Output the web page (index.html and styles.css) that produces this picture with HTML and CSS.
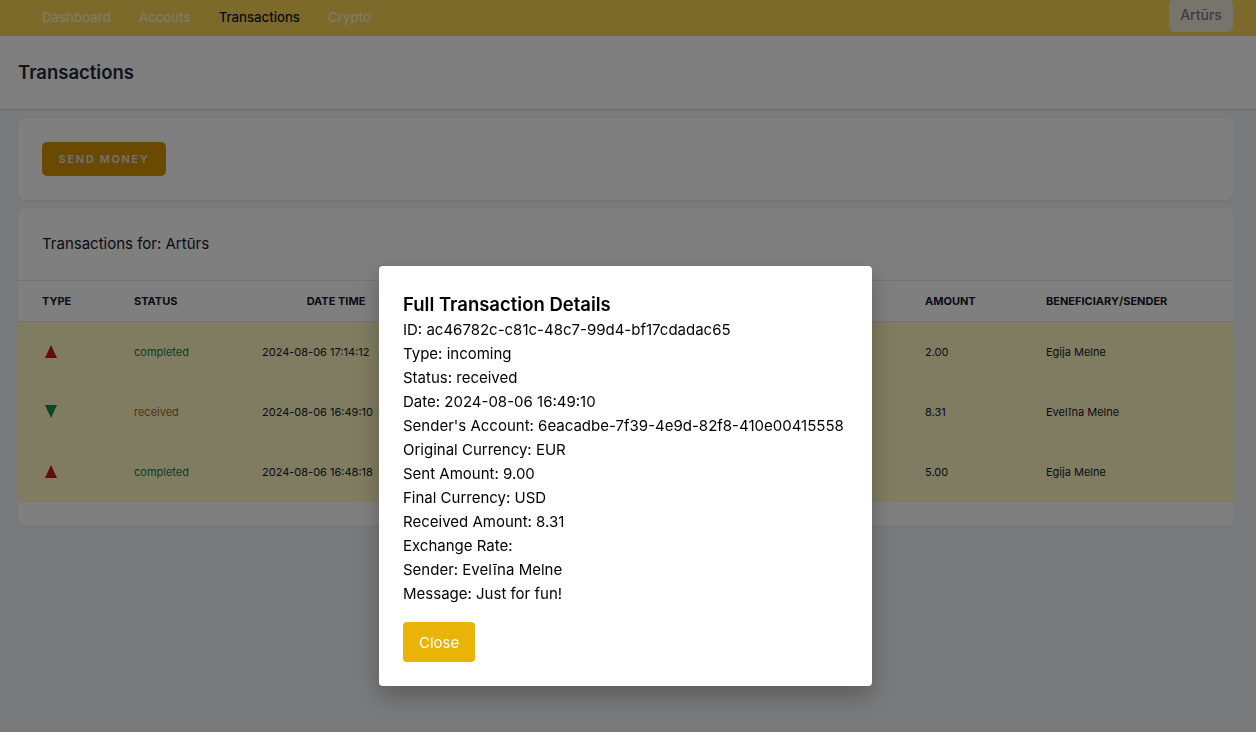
FILE: index.html
```html
<!DOCTYPE html>
<html lang="lv">
<head>
<meta charset="utf-8">
<title>Transactions</title>
<link rel="stylesheet" href="styles.css">
</head>
<body>
<nav class="nav">
  <div class="nav-links">
    <a class="nav-link">Dashboard</a>
    <a class="nav-link">Accouts</a>
    <a class="nav-link active">Transactions</a>
    <a class="nav-link">Crypto</a>
  </div>
  <button class="user-btn">Artūrs</button>
</nav>
<header class="page-header">
  <h2 class="page-title">Transactions</h2>
</header>
<main class="content">
  <section class="card card-actions">
    <button class="send-btn">Send money</button>
  </section>
  <section class="card card-table">
    <div class="table-title">Transactions for: Artūrs</div>
    <table class="tx-table">
      <colgroup>
        <col class="c-type"><col class="c-status"><col class="c-date"><col class="c-desc"><col class="c-cur"><col class="c-amount"><col class="c-benef">
      </colgroup>
      <thead>
        <tr>
          <th>Type</th>
          <th>Status</th>
          <th class="center">Date Time</th>
          <th></th>
          <th></th>
          <th>Amount</th>
          <th>Beneficiary/Sender</th>
        </tr>
      </thead>
      <tbody>
        <tr>
          <td><svg class="tri" width="12" height="13" viewBox="0 0 12 13"><polygon points="6,0 12,13 0,13" fill="#c41a1a"/></svg></td>
          <td class="st-completed">completed</td>
          <td>2024-08-06 17:14:12</td>
          <td></td>
          <td></td>
          <td>2.00</td>
          <td>Egija Melne</td>
        </tr>
        <tr>
          <td><svg class="tri" width="12" height="13" viewBox="0 0 12 13"><polygon points="0,0 12,0 6,13" fill="#1a8a4c"/></svg></td>
          <td class="st-received">received</td>
          <td>2024-08-06 16:49:10</td>
          <td></td>
          <td></td>
          <td>8.31</td>
          <td>Evelīna Melne</td>
        </tr>
        <tr>
          <td><svg class="tri" width="12" height="13" viewBox="0 0 12 13"><polygon points="6,0 12,13 0,13" fill="#c41a1a"/></svg></td>
          <td class="st-completed">completed</td>
          <td>2024-08-06 16:48:18</td>
          <td></td>
          <td></td>
          <td>5.00</td>
          <td>Egija Melne</td>
        </tr>
      </tbody>
    </table>
  </section>
</main>
<div class="backdrop"></div>
<div class="modal">
  <h3 class="modal-title">Full Transaction Details</h3>
  <p class="line">ID: ac46782c-c81c-48c7-99d4-bf17cdadac65</p>
  <p class="line">Type: incoming</p>
  <p class="line">Status: received</p>
  <p class="line">Date: 2024-08-06 16:49:10</p>
  <p class="line">Sender's Account: 6eacadbe-7f39-4e9d-82f8-410e00415558</p>
  <p class="line">Original Currency: EUR</p>
  <p class="line">Sent Amount: 9.00</p>
  <p class="line">Final Currency: USD</p>
  <p class="line">Received Amount: 8.31</p>
  <p class="line">Exchange Rate:</p>
  <p class="line">Sender: Evelīna Melne</p>
  <p class="line">Message: Just for fun!</p>
  <button class="close-btn">Close</button>
</div>
</body>
</html>
```
FILE: styles.css
```css
* { box-sizing: border-box; }
html, body { margin: 0; padding: 0; }
body {
  font-family: Inter, "Noto Sans", "Liberation Sans", sans-serif;
  background: #f3f4f6;
  color: #111827;
  min-height: 732px;
}
.nav {
  height: 36px;
  background: #f8d454;
  display: flex;
  justify-content: space-between;
  align-items: flex-start;
  padding: 0 23px 0 42px;
}
.nav-links {
  display: flex;
  gap: 28px;
  height: 34px;
  align-items: center;
}
.nav-link {
  font-size: 13.2px;
  font-weight: 500;
  color: #fff6d0;
  text-decoration: none;
}
.nav-link.active { color: #111827; }
.user-btn {
  margin-top: -1px;
  height: 33px;
  width: 64px;
  border: 0;
  border-radius: 6px;
  background: #eee8d6;
  color: #767c8c;
  font-family: inherit;
  font-size: 14px;
  font-weight: 500;
  padding: 0 0 2px;
}
.page-header {
  background: #fff;
  padding: 24px 18px;
  box-shadow: 0 1px 2px rgba(0,0,0,0.12), 0 1px 0 rgba(0,0,0,0.06);
  position: relative;
}
.page-title {
  margin: 0;
  font-size: 18.5px;
  line-height: 25px;
  font-weight: 600;
  color: #1f2937;
}
.content {
  padding: 9px 22px 0 18px;
  display: flex;
  flex-direction: column;
  gap: 8px;
}
.card {
  background: #fff;
  border-radius: 8px;
  box-shadow: 0 1px 2px rgba(0,0,0,0.06);
}
.card-actions { padding: 24px; }
.send-btn {
  height: 34px;
  width: 124px;
  padding: 0;
  border: 0;
  border-radius: 5px;
  background: #d49300;
  color: #e4e4e4;
  font-family: inherit;
  font-size: 11px;
  font-weight: 600;
  letter-spacing: 0.15em;
  text-transform: uppercase;
}
.card-table { padding-bottom: 24px; overflow: hidden; }
.table-title {
  padding: 24px;
  font-size: 15px;
  line-height: 24px;
  color: #111827;
}
.tx-table {
  width: 100%;
  border-collapse: collapse;
  table-layout: fixed;
}
.c-type { width: 92px; }
.c-status { width: 128px; }
.c-date { width: 196px; }
.c-desc { width: 240px; }
.c-cur { width: 227px; }
.c-amount { width: 121px; }
.c-benef { width: auto; }
.tx-table thead tr {
  border-top: 1px solid #e5e7eb;
  border-bottom: 1px solid #e5e7eb;
}
.tx-table th {
  text-align: left;
  padding: 0 24px;
  height: 41px;
  font-size: 11px;
  font-weight: 700;
  text-transform: uppercase;
  color: #111827;
  white-space: nowrap;
}
.tx-table th.center { text-align: center; }
.tx-table tbody tr { background: #fef9c3; }
.tx-table td {
  padding: 0 24px;
  height: 60px;
  font-size: 11px;
  color: #111827;
  white-space: nowrap;
}
.tri { display: block; margin-left: 3px; }
.st-completed { color: #1c7a45 !important; }
.st-received { color: #a8652a !important; }
.backdrop {
  position: fixed;
  inset: 0;
  background: rgba(0,0,0,0.5);
}
.modal {
  position: fixed;
  top: 266px;
  left: 379px;
  width: 493px;
  background: #fff;
  border-radius: 4px;
  padding: 24px;
  box-shadow: 0 10px 25px rgba(0,0,0,0.25);
}
.modal-title {
  margin: 0;
  font-size: 18.5px;
  line-height: 28px;
  font-weight: 600;
  color: #000;
}
.line {
  margin: 0;
  font-size: 15px;
  line-height: 24px;
  color: #000;
}
.close-btn {
  margin-top: 16px;
  height: 40px;
  padding: 0 16px;
  border: 0;
  border-radius: 4px;
  background: #eab308;
  color: #fff;
  font-family: inherit;
  font-size: 15px;
}
```
